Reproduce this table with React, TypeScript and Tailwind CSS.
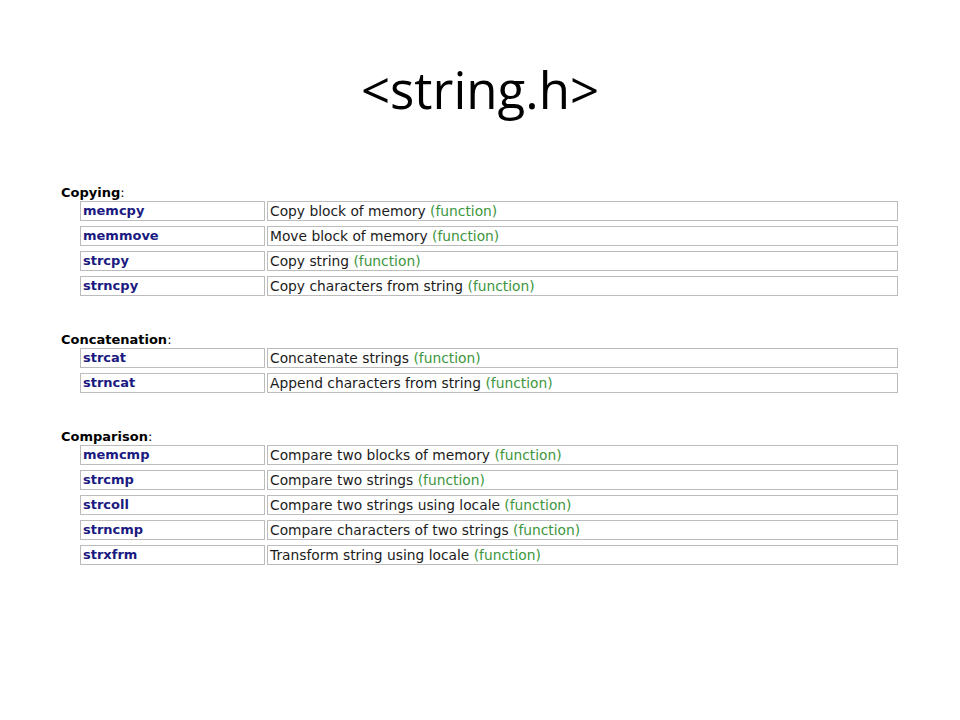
import React from "react";

type Item = { name: string; desc: string };
type Section = { title: string; items: Item[] };

const sections: Section[] = [
  {
    title: "Copying",
    items: [
      { name: "memcpy", desc: "Copy block of memory" },
      { name: "memmove", desc: "Move block of memory" },
      { name: "strcpy", desc: "Copy string" },
      { name: "strncpy", desc: "Copy characters from string" },
    ],
  },
  {
    title: "Concatenation",
    items: [
      { name: "strcat", desc: "Concatenate strings" },
      { name: "strncat", desc: "Append characters from string" },
    ],
  },
  {
    title: "Comparison",
    items: [
      { name: "memcmp", desc: "Compare two blocks of memory" },
      { name: "strcmp", desc: "Compare two strings" },
      { name: "strcoll", desc: "Compare two strings using locale" },
      { name: "strncmp", desc: "Compare characters of two strings" },
      { name: "strxfrm", desc: "Transform string using locale" },
    ],
  },
];

export default function App() {
  return (
    <div className="w-[960px] h-[720px] bg-white overflow-hidden">
      <h1 className="mt-[64px] text-center text-[51px] leading-[51px] text-black font-['Open_Sans',sans-serif] font-normal">
        &lt;string.h&gt;
      </h1>
      <div className="mt-[69px] pl-[61px] flex flex-col gap-[35px] font-['DejaVu_Sans',Verdana,sans-serif]">
        {sections.map((s) => (
          <div key={s.title} className="flex flex-col">
            <div className="h-[17px] leading-[17px] text-[13px] text-black">
              <span className="font-bold">{s.title}</span>:
            </div>
            <div className="ml-[19px] flex flex-col gap-[5px]">
              {s.items.map((it) => (
                <div key={it.name} className="flex gap-[2px] h-[20px]">
                  <div className="w-[185px] h-full border border-[#bcbcbc] pl-[2px] flex items-center text-[13px] font-bold text-[#1a1a80]">
                    {it.name}
                  </div>
                  <div className="w-[631px] h-full border border-[#bcbcbc] pl-[2px] flex items-center text-[13.8px] text-[#1c1c1c] whitespace-nowrap">
                    {it.desc}&nbsp;<span className="text-[#3c963c]">(function)</span>
                  </div>
                </div>
              ))}
            </div>
          </div>
        ))}
      </div>
    </div>
  );
}
